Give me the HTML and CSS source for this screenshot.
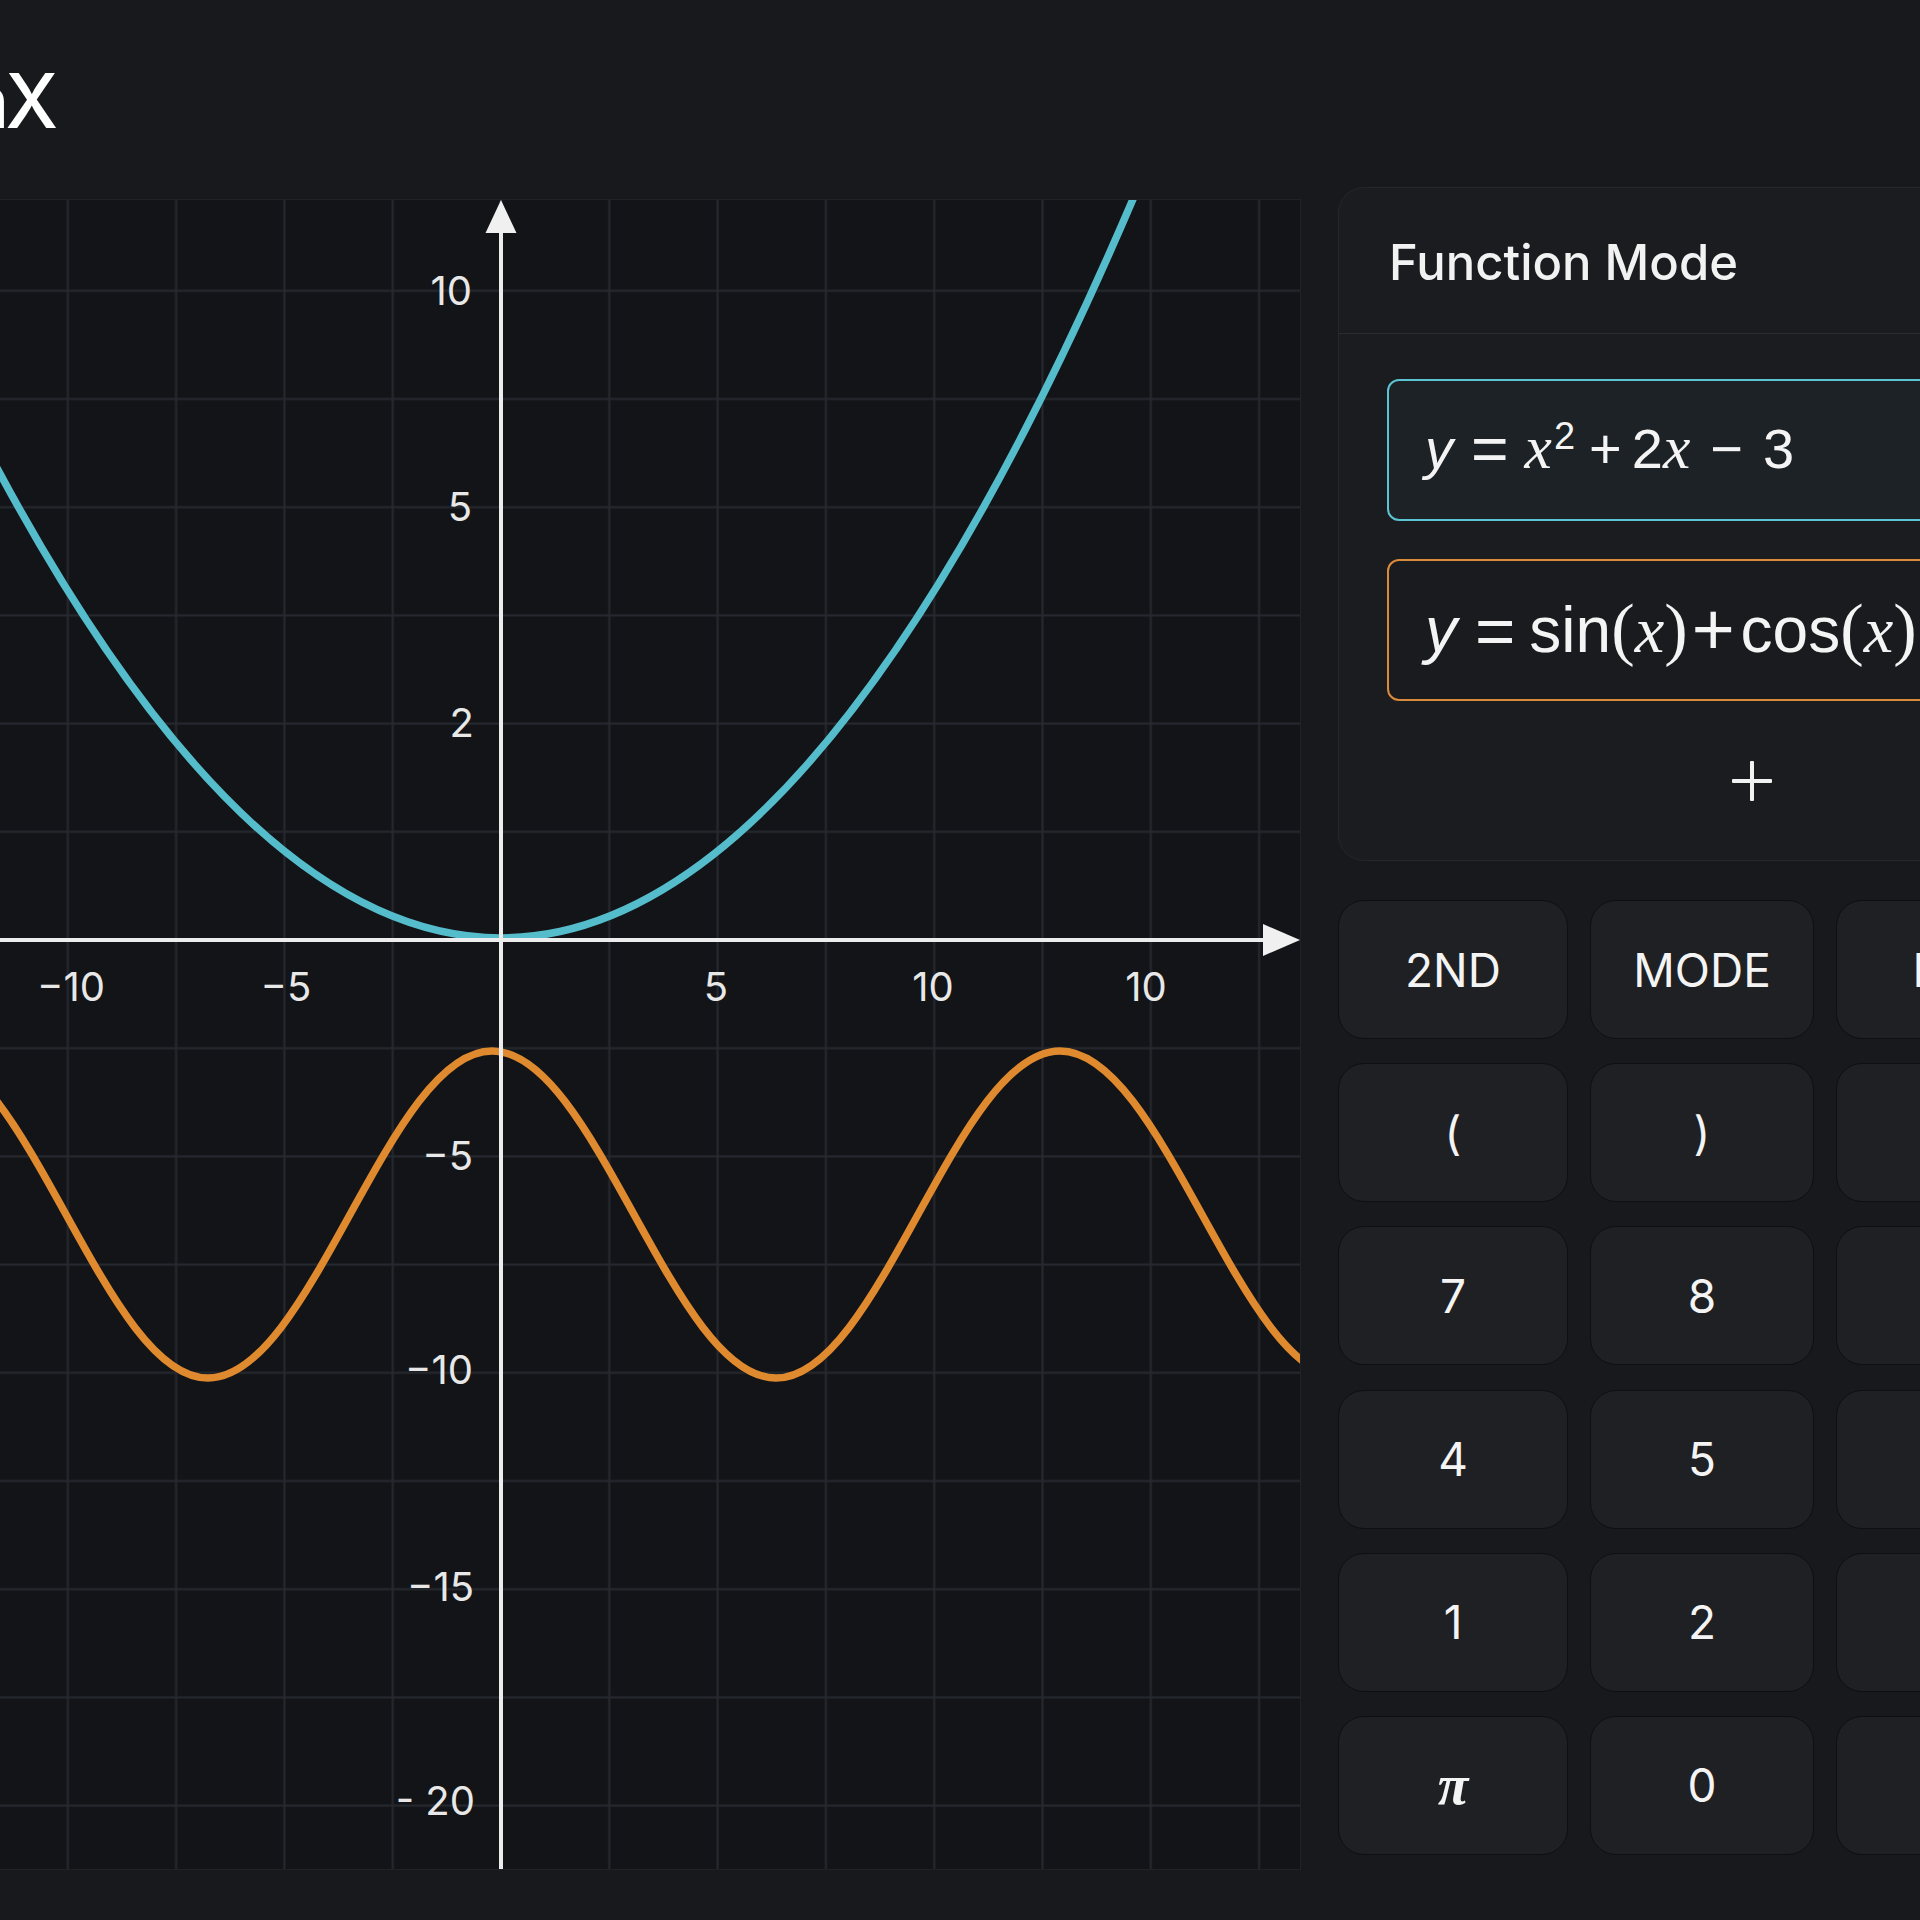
FILE: index.html
```html
<!DOCTYPE html>
<html lang="en">
<head>
<meta charset="utf-8">
<title>GraphMaX</title>
<link rel="stylesheet" href="styles.css">
</head>
<body>
<div class="app">
  <header class="topbar">
    <div class="brand-box"><h1 class="brand">GraphMaX</h1></div>
  </header>
  <main class="workspace">
    <section class="graph">
      <svg class="plot" width="1340" height="1669" viewBox="-40 200 1340 1669" xmlns="http://www.w3.org/2000/svg">
        <defs>
          <pattern id="grid" x="446.85" y="885.9" width="108.3" height="108.2" patternUnits="userSpaceOnUse">
            <path d="M54.15 0V108.2M0 54.1H108.3" stroke="#262930" stroke-width="2" fill="none"/>
          </pattern>
        </defs>
        <rect x="-40" y="200" width="1340" height="1669" fill="url(#grid)"/>
        <path class="curve cyan" d="M -40 396.5 Q 560 1597.5 1160 134.6"/>
        <path class="curve orange" d="M -76 1051
          c 51.4 0 95.7 79.7 142 163.5 c 46.3 83.8 90.6 163.5 142 163.5
          c 51.4 0 95.7 -79.7 142 -163.5 c 46.3 -83.8 90.6 -163.5 142 -163.5
          c 51.4 0 95.7 79.7 142 163.5 c 46.3 83.8 90.6 163.5 142 163.5
          c 51.4 0 95.7 -79.7 142 -163.5 c 46.3 -83.8 90.6 -163.5 142 -163.5
          c 51.4 0 95.7 79.7 142 163.5 c 46.3 83.8 90.6 163.5 142 163.5"/>
        <line class="axis" x1="501" y1="228" x2="501" y2="1869"/>
        <polygon class="arrow" points="501,200 485.5,233 516.5,233"/>
        <line class="axis" x1="-40" y1="940" x2="1268" y2="940"/>
        <polygon class="arrow" points="1300,940 1263,924 1263,956"/>
        <g class="ylabels">
          <text x="472" y="291" dy="0.36em">10</text>
          <text x="472" y="507" dy="0.36em">5</text>
          <text x="474" y="723" dy="0.36em">2</text>
          <text x="473" y="1156" dy="0.36em">−5</text>
          <text x="473" y="1370" dy="0.36em">−10</text>
          <text x="474" y="1587" dy="0.36em">−15</text>
          <text x="475" y="1801" dy="0.36em">- 20</text>
        </g>
        <g class="xlabels">
          <text x="71" y="987" dy="0.36em">−10</text>
          <text x="286" y="987" dy="0.36em">−5</text>
          <text x="716" y="987" dy="0.36em">5</text>
          <text x="933" y="987" dy="0.36em">10</text>
          <text x="1146" y="987" dy="0.36em">10</text>
        </g>
      </svg>
    </section>
    <aside class="side">
      <div class="card">
        <div class="card-head">Function Mode</div>
        <div class="card-body">
          <div class="fn fn-cyan"><span class="math"><i class="vy">y</i><span class="op eq">=</span><i class="vx">x</i><sup>2</sup><span class="op pl">+</span>2<i class="vx">x</i><span class="op mi">−</span>3</span></div>
          <div class="fn fn-orange"><span class="math"><i class="vy">y</i><span class="op eq">=</span>sin<span class="par">(</span><i class="vx">x</i><span class="par">)</span><span class="op pl2">+</span>cos<span class="par">(</span><i class="vx">x</i><span class="par">)</span></span></div>
          <div class="add-row"><span class="plus" aria-label="Add function"></span></div>
        </div>
      </div>
      <div class="keypad">
        <button class="key">2ND</button>
        <button class="key">MODE</button>
        <button class="key">DEL</button>
        <button class="key">CLR</button>
        <button class="key">(</button>
        <button class="key">)</button>
        <button class="key">^</button>
        <button class="key">÷</button>
        <button class="key">7</button>
        <button class="key">8</button>
        <button class="key">9</button>
        <button class="key">×</button>
        <button class="key">4</button>
        <button class="key">5</button>
        <button class="key">6</button>
        <button class="key">−</button>
        <button class="key">1</button>
        <button class="key">2</button>
        <button class="key">3</button>
        <button class="key">+</button>
        <button class="key key-pi">π</button>
        <button class="key">0</button>
        <button class="key">.</button>
        <button class="key">=</button>
      </div>
    </aside>
  </main>
</div>
</body>
</html>
```

FILE: styles.css
```css
html, body {
  margin: 0;
  padding: 0;
}
body {
  width: 1920px;
  height: 1920px;
  overflow: hidden;
  background: #18191c;
  color: #f2f2f2;
  font-family: Inter, "Noto Sans", "Liberation Sans", sans-serif;
}
.app {
  width: 1920px;
}
.topbar {
  height: 187px;
  box-sizing: border-box;
  padding-top: 63px;
}
.brand-box {
  width: 54px;
  display: flex;
  justify-content: flex-end;
}
.brand {
  margin: 0;
  flex: none;
  white-space: nowrap;
  font-size: 75px;
  line-height: 76px;
  font-weight: 500;
  color: #ffffff;
  letter-spacing: -4px;
}
.workspace {
  display: flex;
  align-items: flex-start;
  gap: 38px;
  margin-left: -40px;
}
.graph {
  flex: none;
  width: 1340px;
  height: 1669px;
  margin-top: 13px;
  background: #131417;
  box-shadow: 0 0 0 1px #202226;
}
.plot {
  display: block;
}
.curve {
  fill: none;
  stroke-width: 7.5;
  stroke-linecap: round;
}
.cyan { stroke: #55bccb; }
.orange { stroke: #e08a30; }
.axis {
  stroke: #ececec;
  stroke-width: 4;
}
.arrow { fill: #f0f0f0; }
.ylabels text, .xlabels text {
  font-family: Inter, "Noto Sans", sans-serif;
  font-size: 40px;
  fill: #e8e8e8;
}
.ylabels text { text-anchor: end; }
.xlabels text { text-anchor: middle; }

.side {
  flex: none;
  width: 830px;
}
.card {
  height: 674px;
  box-sizing: border-box;
  background: #1b1c1f;
  border: 1px solid #25272b;
  border-radius: 26px;
  display: flex;
  flex-direction: column;
}
.card-head {
  height: 146px;
  flex: none;
  box-sizing: border-box;
  padding-left: 50px;
  padding-top: 4px;
  display: flex;
  align-items: center;
  font-size: 49px;
  font-weight: 500;
  color: #f2f2f2;
  border-bottom: 1px solid #2a2c30;
}
.card-body {
  flex: 1;
  display: flex;
  flex-direction: column;
  gap: 38px;
  padding: 45px 50px 0 48px;
}
.fn {
  height: 142px;
  box-sizing: border-box;
  border-radius: 12px;
  border: 2px solid;
  display: flex;
  align-items: center;
  padding-left: 36px;
  white-space: nowrap;
  overflow: hidden;
}
.fn-cyan {
  border-color: #5cc3d2;
  background: #1c2225;
  font-size: 56px;
}
.fn-orange {
  border-color: #d98a3b;
  background: #1a1b1e;
  font-size: 64px;
}
.math {
  color: #f4f4f4;
  font-family: "Liberation Sans", Arial, sans-serif;
  line-height: 1.2;
}
.vy {
  font-family: "Liberation Sans", Arial, sans-serif;
  font-style: italic;
}
.vx {
  font-family: "Liberation Serif", "DejaVu Serif", serif;
  font-style: italic;
  font-size: 1.1em;
}
.fn-orange .vx {
  font-size: 1.04em;
}
.op.eq {
  font-size: 1.15em;
  vertical-align: -0.05em;
  margin: 0 16px 0 18px;
}
.fn-orange .op.eq {
  font-size: 1.08em;
  margin: 0 14px 0 18px;
}
.op.pl {
  margin: 0 10px 0 14px;
}
.op.mi {
  margin: 0 20px;
}
.op.pl2 {
  font-size: 1.15em;
  vertical-align: -0.05em;
  margin: 0 6px 0 4px;
}
.par {
  font-family: "Liberation Serif", "DejaVu Serif", serif;
  font-size: 1.1em;
}
.math sup {
  font-size: 38px;
  vertical-align: 0.5em;
  line-height: 0;
  margin-left: 2px;
}
.add-row {
  flex: 1;
  margin-top: -38px;
  display: flex;
  align-items: center;
  justify-content: center;
}
.plus {
  position: relative;
  width: 40px;
  height: 40px;
}
.plus::before, .plus::after {
  content: "";
  position: absolute;
  background: #f2f2f2;
  border-radius: 1px;
}
.plus::before {
  left: 0;
  right: 0;
  top: 18px;
  height: 4px;
}
.plus::after {
  top: 0;
  bottom: 0;
  left: 18px;
  width: 4px;
}
.keypad {
  margin-top: 39px;
  display: grid;
  grid-template-columns: 230px 224px 240px 228px;
  grid-auto-rows: 139px;
  column-gap: 22px;
  row-gap: 24.2px;
}
.key {
  margin: 0;
  padding: 0;
  box-sizing: border-box;
  background: #1f2024;
  border: 1.5px solid #0e0f11;
  border-radius: 26px;
  color: #f4f4f4;
  font-family: Inter, "Noto Sans", sans-serif;
  font-size: 46px;
  font-weight: 400;
  display: flex;
  align-items: center;
  justify-content: center;
}
.key-pi {
  font-family: "Liberation Serif", "DejaVu Serif", serif;
  font-style: italic;
  font-weight: 700;
  font-size: 56px;
}
```
